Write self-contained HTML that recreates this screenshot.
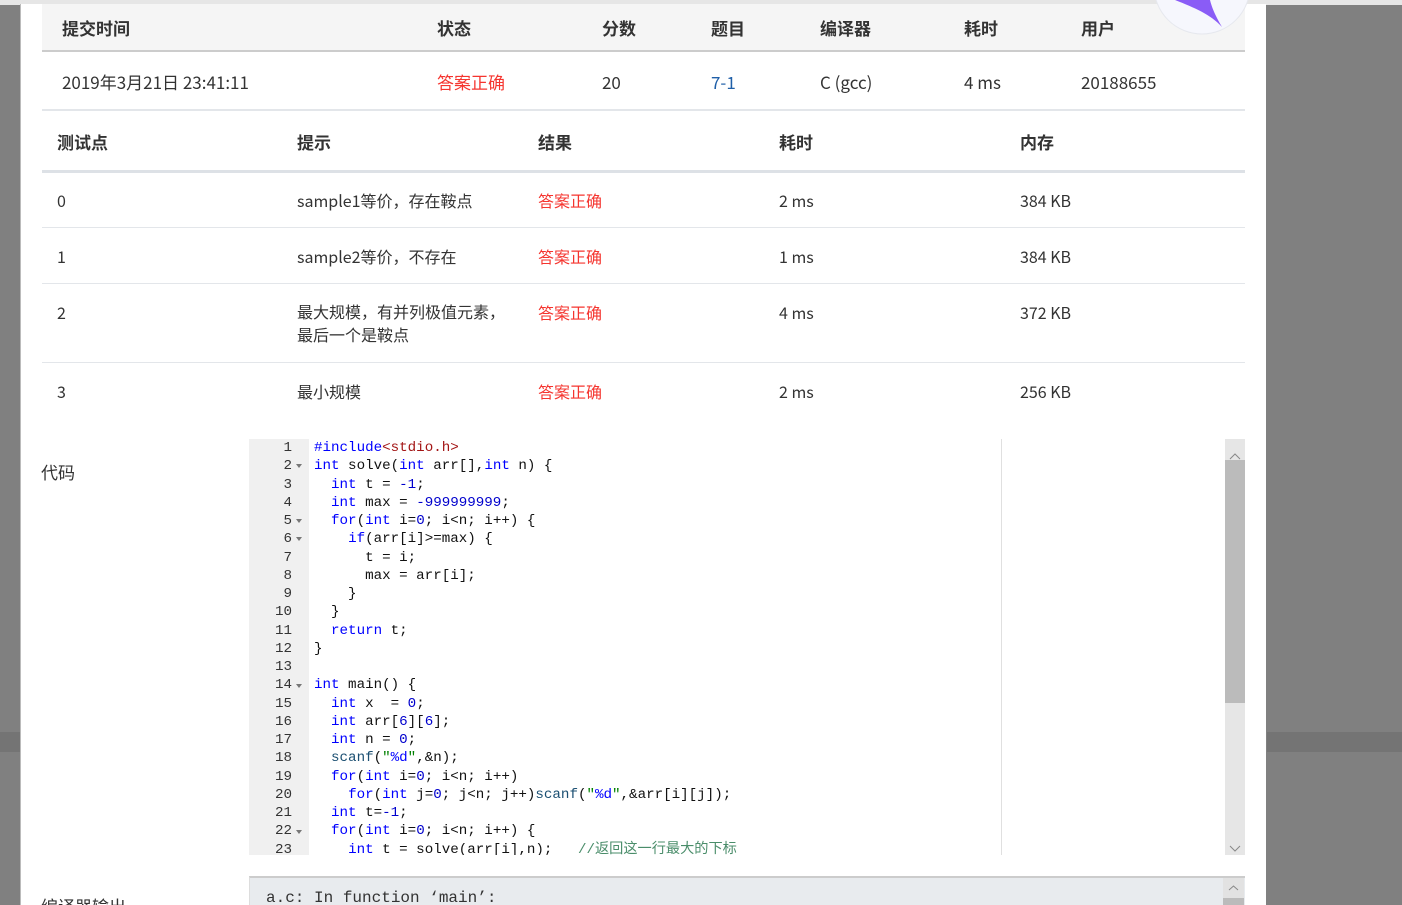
<!DOCTYPE html>
<html style="width:1402px;height:905px;overflow:hidden"><head><meta charset="utf-8"><style>
*{margin:0;padding:0;box-sizing:border-box}
body{width:1402px;height:905px;overflow:hidden;background:#808080;font-family:"Noto Sans CJK SC","Liberation Sans",sans-serif;color:#333;position:relative}
.topbar{position:absolute;left:0;top:0;width:1402px;height:5px;background:#e6e6e6}
.dark{position:absolute;top:732px;height:20px;background:#747474}
.modal{position:absolute;left:20px;top:4px;width:1246px;height:901px;background:#fff;border-left:1px solid #bbb;overflow:hidden}
.abs{position:absolute;white-space:nowrap;line-height:24px}
.h{font-weight:bold;font-size:17px;color:#333}
.t{font-size:16px;color:#333}
.red{color:#f5352f}
.blue{color:#1f5fa8}
.line{position:absolute;left:21px;width:1203px}
.fold{position:absolute;left:48px;width:0;height:0;border-left:3px solid transparent;border-right:3px solid transparent;border-top:4px solid #777}
.k{color:#0000ff}.n{color:#0000cd}.s{color:#a31515}.g{color:#008000}.c{color:#4a8d6a}.i{color:#0000ff}
</style></head><body>
<div class="topbar"></div>
<div class="dark" style="left:0;width:20px"></div>
<div class="dark" style="left:1267px;width:135px"></div>
<div class="modal">
 <div class="abs" style="left:21px;top:0;width:1203px;height:48px;background:#f5f5f5;border-bottom:2px solid #ccc"></div>
 <div class="abs h" style="left:41px;top:12px">提交时间</div>
 <div class="abs h" style="left:416px;top:12px">状态</div>
 <div class="abs h" style="left:581px;top:12px">分数</div>
 <div class="abs h" style="left:690px;top:12px">题目</div>
 <div class="abs h" style="left:799px;top:12px">编译器</div>
 <div class="abs h" style="left:943px;top:12px">耗时</div>
 <div class="abs h" style="left:1060px;top:12px">用户</div>
 <div class="abs t" style="left:41px;top:66px;font-size:17px">2019年3月21日 23:41:11</div>
 <div class="abs t red" style="left:416px;top:66px;font-size:17px">答案正确</div>
 <div class="abs t" style="left:581px;top:66px;font-size:17px">20</div>
 <div class="abs t blue" style="left:690px;top:66px;font-size:17px">7-1</div>
 <div class="abs t" style="left:799px;top:66px;font-size:17px">C (gcc)</div>
 <div class="abs t" style="left:943px;top:66px;font-size:17px">4 ms</div>
 <div class="abs t" style="left:1060px;top:66px;font-size:17px">20188655</div>
 <div class="line" style="top:105px;height:2px;background:#e3e6ea"></div>

 <div class="abs h" style="left:36px;top:126px">测试点</div>
 <div class="abs h" style="left:276px;top:126px">提示</div>
 <div class="abs h" style="left:517px;top:126px">结果</div>
 <div class="abs h" style="left:758px;top:126px">耗时</div>
 <div class="abs h" style="left:999px;top:126px">内存</div>
 <div class="line" style="top:166px;height:3px;background:#dde1e6"></div>

 <div class="abs t" style="left:36px;top:184px">0</div>
 <div class="abs t" style="left:276px;top:184px">sample1等价，存在鞍点</div>
 <div class="abs t red" style="left:517px;top:184px">答案正确</div>
 <div class="abs t" style="left:758px;top:184px">2 ms</div>
 <div class="abs t" style="left:999px;top:184px">384 KB</div>
 <div class="line" style="top:223px;height:1px;background:#e3e6ea"></div>

 <div class="abs t" style="left:36px;top:240px">1</div>
 <div class="abs t" style="left:276px;top:240px">sample2等价，不存在</div>
 <div class="abs t red" style="left:517px;top:240px">答案正确</div>
 <div class="abs t" style="left:758px;top:240px">1 ms</div>
 <div class="abs t" style="left:999px;top:240px">384 KB</div>
 <div class="line" style="top:279px;height:1px;background:#e3e6ea"></div>

 <div class="abs t" style="left:36px;top:296px">2</div>
 <div class="abs t" style="left:276px;top:296px;line-height:23px">最大规模，有并列极值元素，<br>最后一个是鞍点</div>
 <div class="abs t red" style="left:517px;top:296px">答案正确</div>
 <div class="abs t" style="left:758px;top:296px">4 ms</div>
 <div class="abs t" style="left:999px;top:296px">372 KB</div>
 <div class="line" style="top:358px;height:1px;background:#e3e6ea"></div>

 <div class="abs t" style="left:36px;top:375px">3</div>
 <div class="abs t" style="left:276px;top:375px">最小规模</div>
 <div class="abs t red" style="left:517px;top:375px">答案正确</div>
 <div class="abs t" style="left:758px;top:375px">2 ms</div>
 <div class="abs t" style="left:999px;top:375px">256 KB</div>

 <div class="abs t" style="left:20px;top:456px;font-size:17px">代码</div>
 <div class="abs t" style="left:20px;top:890px;font-size:17px">编译器输出</div>

 <div style="position:absolute;left:228px;top:435px;width:60px;height:416px;background:#f0f0f0"></div>
 <div style="position:absolute;left:980px;top:435px;width:1px;height:416px;background:#e0e0e0"></div>
 <div style="position:absolute;left:1204px;top:435px;width:20px;height:416px;background:#e6e6e6"></div>
 <div style="position:absolute;left:1204px;top:456px;width:20px;height:243px;background:#bbb"></div>
 <svg style="position:absolute;left:1204px;top:435px" width="20" height="416"><path d="M9 20 L14 15 L19 20" transform="translate(-4,0)" fill="none" stroke="#888" stroke-width="1"/><path d="M5 407 L10 412 L15 407" fill="none" stroke="#888" stroke-width="1"/></svg>

 <div style="position:absolute;left:228px;top:872px;width:996px;height:40px;background:#e8ebee;border-top:2px solid #ccc;border-left:1px solid #ddd"></div>
 <div style="position:absolute;left:1202px;top:874px;width:21px;height:27px;background:#e2e2e2"></div>
 <div style="position:absolute;left:1202px;top:894px;width:21px;height:10px;background:#bbb"></div>
 <svg style="position:absolute;left:1202px;top:874px" width="21" height="20"><path d="M6 12 L10.5 8 L15 12" fill="none" stroke="#888"/></svg>
 <div class="abs" style="left:245px;top:882px;font-family:'Liberation Mono',monospace;font-size:16px;color:#333">a.c: In function ‘main’:</div>
</div>
<div style="position:absolute;left:248px;top:439px;width:750px;height:416px;overflow:hidden;font-family:'Liberation Mono','Noto Sans CJK SC',monospace;font-size:14.2px;line-height:18.25px">
<div style="position:absolute;left:0;top:0;width:44px;text-align:right;color:#333">1<br>2<br>3<br>4<br>5<br>6<br>7<br>8<br>9<br>10<br>11<br>12<br>13<br>14<br>15<br>16<br>17<br>18<br>19<br>20<br>21<br>22<br>23</div>
<div class="fold" style="top:25px"></div><div class="fold" style="top:80px"></div><div class="fold" style="top:98px"></div><div class="fold" style="top:245px"></div><div class="fold" style="top:391px"></div>
<div style="position:absolute;left:66px;top:0;white-space:pre;color:#111"><span class="k">#include</span><span class="s">&lt;stdio.h&gt;</span>
<span class="k">int</span> solve(<span class="k">int</span> arr[],<span class="k">int</span> n) {
  <span class="k">int</span> t = <span class="n">-1</span>;
  <span class="k">int</span> max = <span class="n">-999999999</span>;
  <span class="k">for</span>(<span class="k">int</span> i=<span class="n">0</span>; i&lt;n; i++) {
    <span class="k">if</span>(arr[i]&gt;=max) {
      t = i;
      max = arr[i];
    }
  }
  <span class="k">return</span> t;
}

<span class="k">int</span> main() {
  <span class="k">int</span> x  = <span class="n">0</span>;
  <span class="k">int</span> arr[<span class="n">6</span>][<span class="n">6</span>];
  <span class="k">int</span> n = <span class="n">0</span>;
  <span style="color:#1b4f72">scanf</span>(<span class="g">"<span class="i">%d</span>"</span>,&amp;n);
  <span class="k">for</span>(<span class="k">int</span> i=<span class="n">0</span>; i&lt;n; i++)
    <span class="k">for</span>(<span class="k">int</span> j=<span class="n">0</span>; j&lt;n; j++)<span style="color:#1b4f72">scanf</span>(<span class="g">"<span class="i">%d</span>"</span>,&amp;arr[i][j]);
  <span class="k">int</span> t=<span class="n">-1</span>;
  <span class="k">for</span>(<span class="k">int</span> i=<span class="n">0</span>; i&lt;n; i++) {
    <span class="k">int</span> t = solve(arr[i],n);   <span class="c">//返回这一行最大的下标</span></div>
</div>
<svg style="position:absolute;left:1150px;top:0" width="110" height="40" viewBox="0 0 110 40">
<circle cx="52" cy="-14" r="48" fill="#f6f7fd" stroke="#e6e8ee"/>
<path d="M25 0 C45 8 60 14 72 27 C65 15 62 8 60 0 Z" fill="#8a5cf6"/>
</svg>
</body></html>
